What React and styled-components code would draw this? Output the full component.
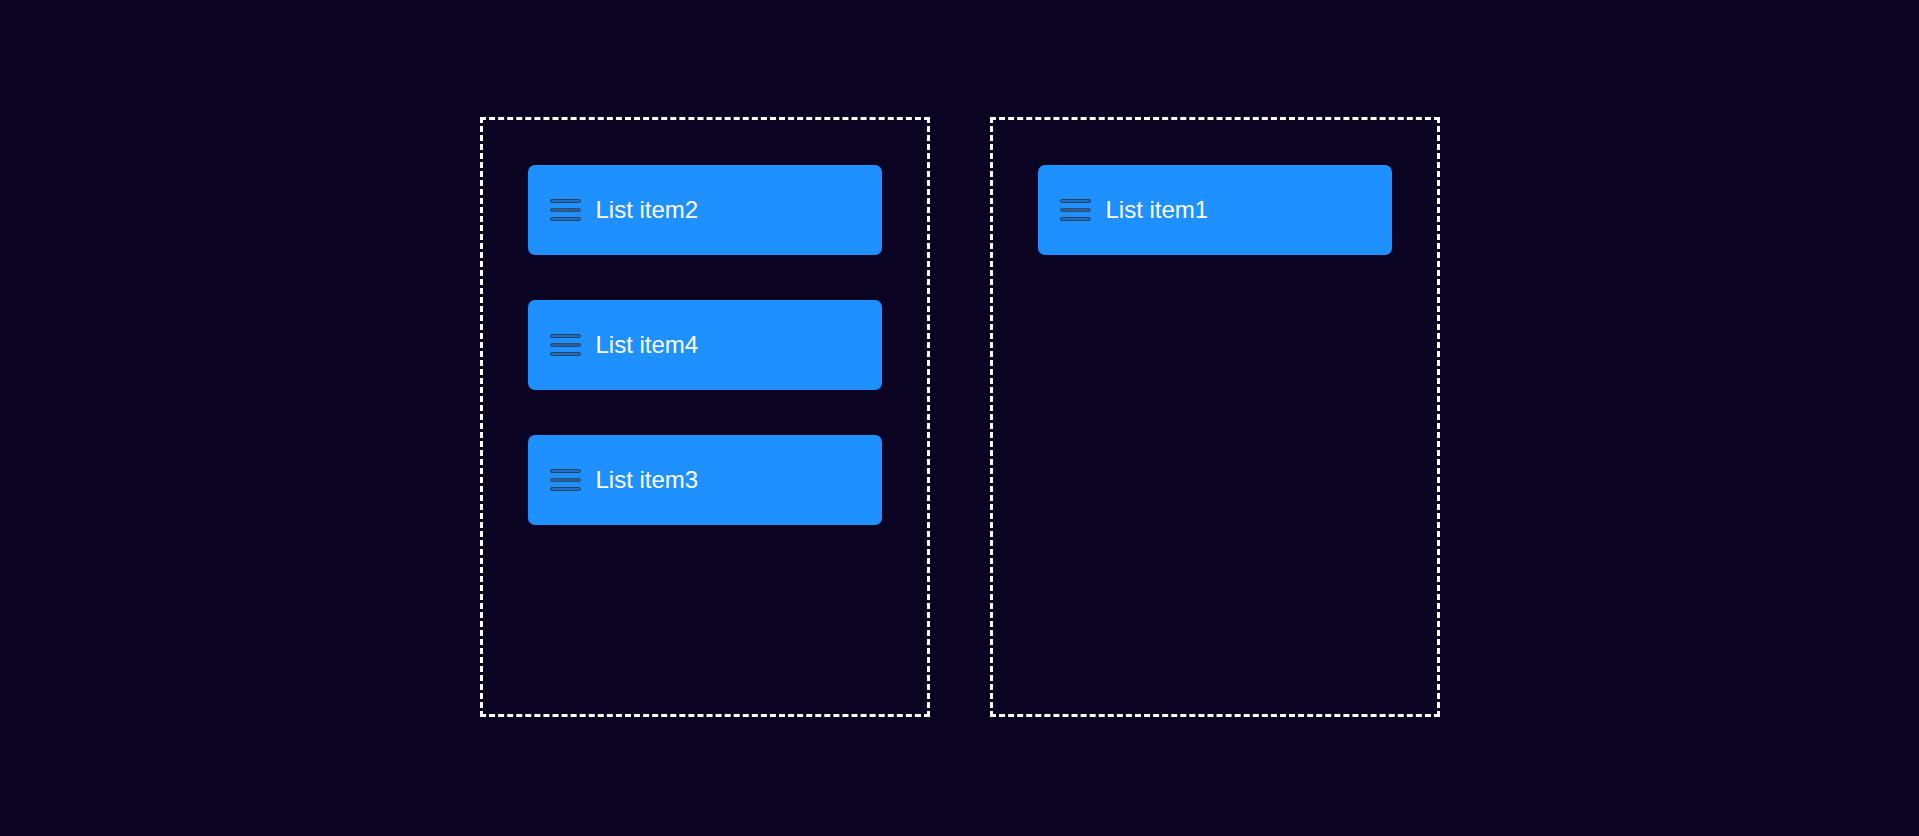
import styled, { createGlobalStyle } from "styled-components";

const GlobalStyle = createGlobalStyle`
    html, body {
        margin: 0;
        padding: 0;
        background-color: #0A0422;
        font-family: "Liberation Sans", Arial, sans-serif;
    }
`;

const columns = [
    ["List item2", "List item4", "List item3"],
    ["List item1"],
];

function DragHandle() {
    return (
        <HandleIcon width="32" height="22" viewBox="0 0 32 22">
            <rect x="0.5" y="0.5" width="30" height="3" rx="1.5" fill="#1F6FC4" stroke="#26405E" strokeWidth="1" />
            <rect x="0.5" y="9.5" width="30" height="3" rx="1.5" fill="#2B5F96" stroke="#284E78" strokeWidth="1" />
            <rect x="0.5" y="18.5" width="30" height="3" rx="1.5" fill="#1F6FC4" stroke="#26405E" strokeWidth="1" />
        </HandleIcon>
    );
}

export default function App() {
    return (
        <>
            <GlobalStyle />
            <Page>
                <Board>
                    {columns.map((items, i) => (
                        <Column key={i}>
                            {items.map((label) => (
                                <Card key={label}>
                                    <DragHandle />
                                    <Label>{label}</Label>
                                </Card>
                            ))}
                        </Column>
                    ))}
                </Board>
            </Page>
        </>
    );
}

const Page = styled.div`
    min-height: 836px;
    box-sizing: border-box;
    padding-top: 117px;
    display: flex;
    justify-content: center;
    align-items: flex-start;
`;

const Board = styled.div`
    display: flex;
    gap: 60px;
`;

const Column = styled.div`
    box-sizing: border-box;
    width: 450px;
    height: 600px;
    border: 3px dashed #FFFFFF;
    padding: 45px;
    display: flex;
    flex-direction: column;
    gap: 45px;
`;

const Card = styled.div`
    box-sizing: border-box;
    height: 90px;
    width: 354px;
    background-color: #1E90FF;
    border-radius: 7px;
    display: flex;
    align-items: center;
    padding-left: 22px;
`;

const HandleIcon = styled.svg`
    flex-shrink: 0;
`;

const Label = styled.span`
    margin-left: 14px;
    font-size: 24px;
    color: #FFFFFF;
`;
